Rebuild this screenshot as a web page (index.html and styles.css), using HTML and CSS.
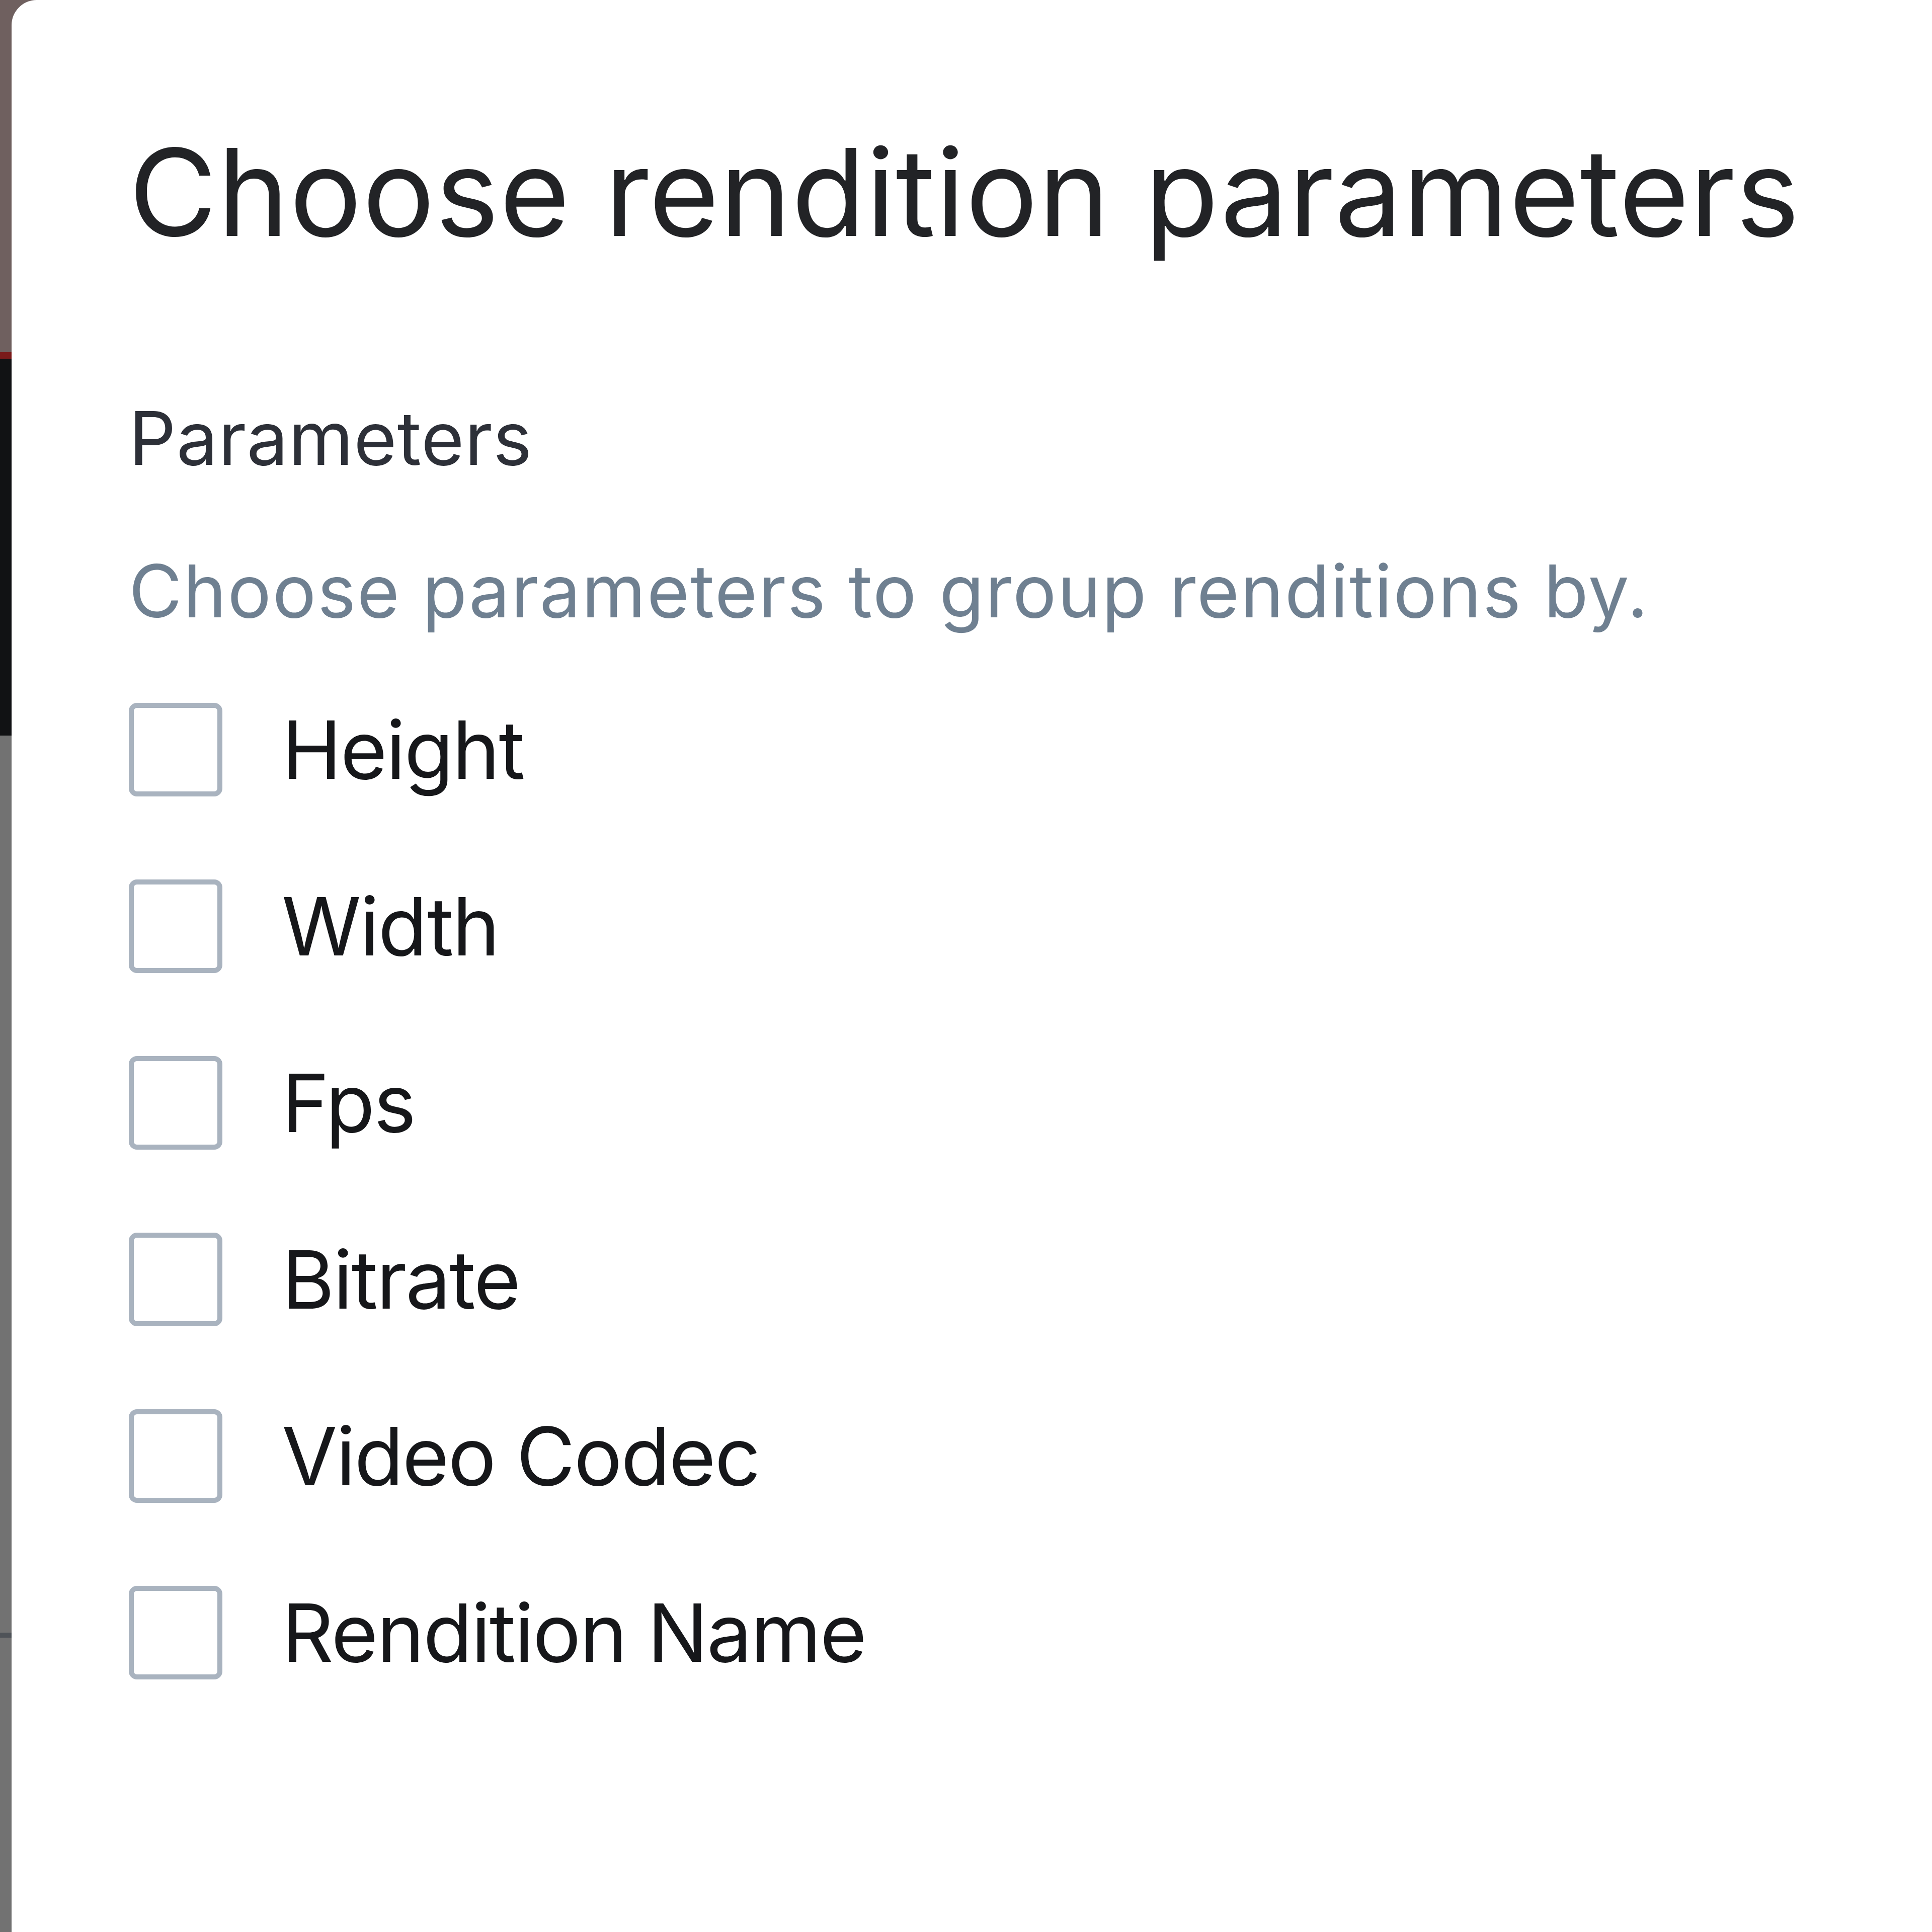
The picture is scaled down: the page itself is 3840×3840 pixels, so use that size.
FILE: index.html
```html
<!DOCTYPE html>
<html lang="en">
<head>
<meta charset="utf-8">
<title>Choose rendition parameters</title>
<link rel="stylesheet" href="styles.css">
</head>
<body>
<div class="modal">
  <h1 class="title">Choose rendition parameters</h1>
  <h2 class="section">Parameters</h2>
  <p class="hint">Choose parameters to group renditions by.</p>
  <ul class="options">
    <li class="option"><span class="box"></span><span class="label">Height</span></li>
    <li class="option"><span class="box"></span><span class="label">Width</span></li>
    <li class="option"><span class="box"></span><span class="label">Fps</span></li>
    <li class="option"><span class="box"></span><span class="label">Bitrate</span></li>
    <li class="option"><span class="box"></span><span class="label">Video Codec</span></li>
    <li class="option"><span class="box"></span><span class="label">Rendition Name</span></li>
  </ul>
</div>
</body>
</html>
```
FILE: styles.css
```css
html, body {
  margin: 0;
  padding: 0;
}
body {
  width: 3840px;
  min-height: 3840px;
  font-family: Inter, "Noto Sans", "Liberation Sans", sans-serif;
  background: linear-gradient(to bottom,
    #6f605f 0px, #6f605f 700px,
    #7a1a1a 700px, #7a1a1a 713px,
    #111214 713px, #111214 1462px,
    #727272 1462px, #727272 3245px,
    #4f5358 3245px, #4f5358 3255px,
    #727272 3255px, #727272 3840px);
  overflow: hidden;
}
.modal {
  margin-left: 23px;
  min-height: 3840px;
  background: #ffffff;
  border-top-left-radius: 50px;
  padding: 238px 0 0 233px;
  box-sizing: border-box;
}
.title {
  margin: 0;
  font-size: 240px;
  line-height: 288px;
  font-weight: 400;
  color: #222326;
  letter-spacing: 1px;
}
.section {
  margin: 257px 0 0 0;
  font-size: 147px;
  line-height: 176px;
  font-weight: 400;
  color: #2d3038;
  letter-spacing: 0.8px;
}
.hint {
  margin: 129px 0 0 0;
  font-size: 145px;
  line-height: 174px;
  font-weight: 400;
  color: #6f8091;
  letter-spacing: 2.3px;
}
.options {
  list-style: none;
  margin: 135px 0 0 0;
  padding: 0;
  display: flex;
  flex-direction: column;
  gap: 165px;
}
.option {
  display: flex;
  align-items: center;
  gap: 118px;
  height: 186px;
}
.box {
  width: 186px;
  height: 186px;
  box-sizing: border-box;
  border: 10px solid #a9b3bf;
  border-radius: 16px;
  background: #ffffff;
  flex: none;
}
.label {
  font-size: 160px;
  line-height: 186px;
  color: #16171a;
  letter-spacing: -2.5px;
}
```
